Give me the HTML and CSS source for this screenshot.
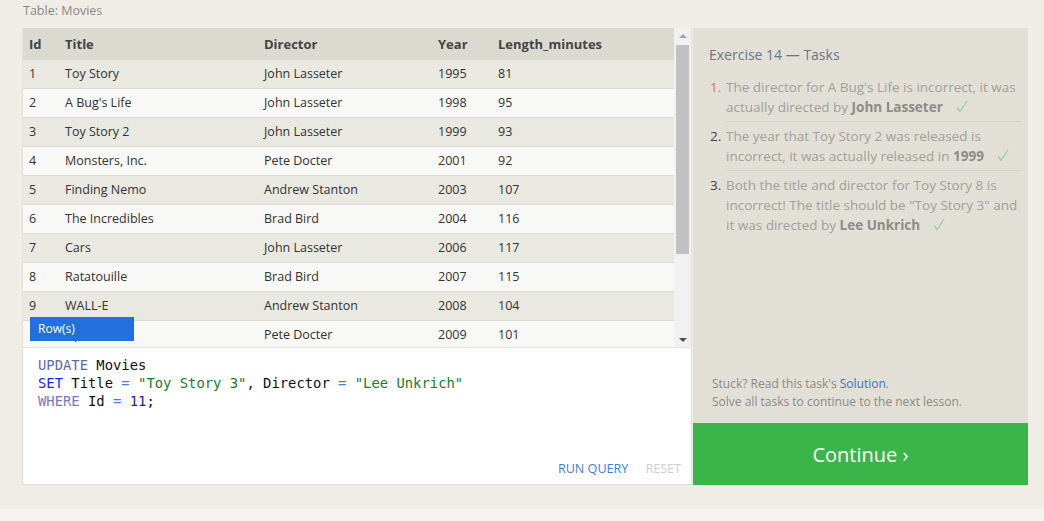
FILE: index.html
```html
<!DOCTYPE html>
<html>
<head>
<meta charset="utf-8">
<link rel="stylesheet" href="styles.css">
</head>
<body>
<div class="page">
  <div class="caption">Table: Movies</div>
  <div class="lesson">
    <div class="left">
      <div class="results">
        <div class="table">
          <div class="row head"><div>Id</div><div>Title</div><div>Director</div><div>Year</div><div>Length_minutes</div></div>
          <div class="row odd"><div>1</div><div>Toy Story</div><div>John Lasseter</div><div>1995</div><div>81</div></div>
          <div class="row even"><div>2</div><div>A Bug's Life</div><div>John Lasseter</div><div>1998</div><div>95</div></div>
          <div class="row odd"><div>3</div><div>Toy Story 2</div><div>John Lasseter</div><div>1999</div><div>93</div></div>
          <div class="row even"><div>4</div><div>Monsters, Inc.</div><div>Pete Docter</div><div>2001</div><div>92</div></div>
          <div class="row odd"><div>5</div><div>Finding Nemo</div><div>Andrew Stanton</div><div>2003</div><div>107</div></div>
          <div class="row even"><div>6</div><div>The Incredibles</div><div>Brad Bird</div><div>2004</div><div>116</div></div>
          <div class="row odd"><div>7</div><div>Cars</div><div>John Lasseter</div><div>2006</div><div>117</div></div>
          <div class="row even"><div>8</div><div>Ratatouille</div><div>Brad Bird</div><div>2007</div><div>115</div></div>
          <div class="row odd"><div>9</div><div>WALL-E</div><div>Andrew Stanton</div><div>2008</div><div>104</div></div>
          <div class="row even"><div>10</div><div>Up</div><div>Pete Docter</div><div>2009</div><div>101</div></div>
          <div class="tooltip">Row(s)</div>
        </div>
        <div class="scrollbar">
          <div class="arrow up"></div>
          <div class="track"><div class="thumb"></div></div>
          <div class="arrow down"></div>
        </div>
      </div>
      <div class="editor">
        <pre class="code"><span class="kw1">UPDATE</span> Movies
<span class="kw2">SET</span> Title <span class="op">=</span> <span class="str">"Toy Story 3"</span>, Director <span class="op">=</span> <span class="str">"Lee Unkrich"</span>
<span class="kw3">WHERE</span> Id <span class="op">=</span> <span class="num">11</span>;</pre>
        <div class="actions"><span class="run">RUN QUERY</span><span class="reset">RESET</span></div>
      </div>
    </div>
    <div class="right">
      <div class="tasks">
        <div class="tasks-title">Exercise 14 — Tasks</div>
        <ol class="task-list">
          <li class="task first"><span class="n">1.</span><span class="t">The director for A Bug's Life is incorrect, it was actually directed by <b>John Lasseter</b><svg class="check" width="12" height="13" viewBox="0 0 12 13"><polyline points="1,7.5 4,11.5 11,1" fill="none" stroke="#8fd29c" stroke-width="1.3"/></svg></span></li>
          <li class="task"><span class="n">2.</span><span class="t">The year that Toy Story 2 was released is incorrect, it was actually released in <b>1999</b><svg class="check" width="12" height="13" viewBox="0 0 12 13"><polyline points="1,7.5 4,11.5 11,1" fill="none" stroke="#8fd29c" stroke-width="1.3"/></svg></span></li>
          <li class="task"><span class="n">3.</span><span class="t">Both the title and director for Toy Story 8 is incorrect! The title should be "Toy Story 3" and it was directed by <b>Lee Unkrich</b><svg class="check" width="12" height="13" viewBox="0 0 12 13"><polyline points="1,7.5 4,11.5 11,1" fill="none" stroke="#8fd29c" stroke-width="1.3"/></svg></span></li>
        </ol>
      </div>
      <div class="help">
        <div>Stuck? Read this task's <span class="link">Solution</span>.</div>
        <div>Solve all tasks to continue to the next lesson.</div>
      </div>
      <div class="continue">Continue ›</div>
    </div>
  </div>
</div>
<div class="footer"></div>
</body>
</html>
```

FILE: styles.css
```css
* { box-sizing: border-box; }
html, body { margin: 0; padding: 0; }
body {
  background: #f4f3ef;
  font-family: "Open Sans", "Noto Sans", sans-serif;
  color: #333;
}
.page {
  background: #efede6;
  height: 509px;
  padding: 2px 16px 0 22px;
}
.caption {
  font-size: 12.5px;
  color: #888;
  height: 26px;
  line-height: 17px;
  padding-left: 1px;
}
.lesson {
  display: flex;
  height: 457px;
}
.left {
  width: 670px;
  border: 1px solid #e2e0d8;
  border-top: 0;
  display: flex;
  flex-direction: column;
  background: #fff;
}
.results {
  display: flex;
  height: 320px;
  border-bottom: 1px solid #e4e2da;
  overflow: hidden;
}
.table {
  width: 652px;
  position: relative;
  font-size: 12.5px;
  background: #f8f8f7;
}
.row {
  display: grid;
  grid-template-columns: 36px 199px 174px 60px 1fr;
  height: 29px;
  align-items: center;
  border-bottom: 1px solid #dcdbd4;
  padding-bottom: 1px;
}
.row > div { padding-left: 6px; white-space: nowrap; }
.row.head {
  height: 32px;
  background: #dbdad0;
  font-weight: 700;
  font-size: 13px;
  color: #444;
  border-bottom: 0;
  padding-bottom: 0;
}
.row.odd { background: #e9e8e1; }
.row.even { background: #f8f8f7; }
.tooltip {
  position: absolute;
  left: 7px;
  top: 289px;
  width: 104px;
  height: 24px;
  background: #2270dd;
  color: #fff;
  font-size: 12px;
  line-height: 23px;
  padding-left: 8px;
}
.scrollbar {
  width: 17px;
  background: #f1f1f1;
  display: flex;
  flex-direction: column;
  align-items: center;
}
.arrow { width: 17px; height: 17px; position: relative; }
.arrow::after {
  content: "";
  position: absolute;
  left: 5px;
  border-left: 4px solid transparent;
  border-right: 4px solid transparent;
}
.arrow.up::after { top: 6px; border-bottom: 4px solid #a3a3a3; }
.arrow.down::after { top: 8px; border-top: 4px solid #505050; }
.track { flex: 1; width: 100%; padding: 0 2px; }
.thumb { height: 209px; background: #c1c1c1; }
.editor {
  flex: 1;
  display: flex;
  flex-direction: column;
  background: #fff;
}
.code {
  margin: 0;
  padding: 8px 15px 0;
  font-family: "DejaVu Sans Mono", "Liberation Mono", monospace;
  font-size: 13.85px;
  line-height: 18px;
  color: #111;
  flex: 1;
}
.kw1 { color: #5f6aa8; }
.kw2 { color: #2222ee; }
.kw3 { color: #8077c0; }
.op { color: #4f7fd0; }
.str { color: #237a2a; }
.num { color: #2020b0; }
.actions {
  display: flex;
  justify-content: flex-end;
  gap: 17px;
  padding: 0 10px 7px 0;
  font-size: 12.6px;
}
.run { color: #3d7fdf; }
.reset { color: #cfcfcf; }
.right {
  width: 335px;
  background: #e2e0d6;
  display: flex;
  flex-direction: column;
  margin-left: 1px;
}
.tasks { flex: 1; padding: 17px 7px 0 16px; }
.tasks-title {
  font-size: 14px;
  color: #6b7585;
  line-height: 20px;
  margin-bottom: 12px;
}
.task-list { list-style: none; margin: 0; padding: 0; }
.task {
  display: flex;
  font-size: 13.5px;
  line-height: 20px;
  color: #a09f99;
}
.task + .task .t { border-top: 1px solid #d5d3c9; padding-top: 4px; }
.task .t { padding-bottom: 4px; flex: 1; }
.task .n { width: 17px; color: #3b4250; flex: none; text-align: left; padding-left: 1px; }
.task + .task .n { padding-top: 5px; }
.task.first .n { color: #c8862a; }
.task b { color: #8c8b86; }
.check { margin-left: 13px; vertical-align: -1px; }
.help {
  padding: 0 16px 12px 19px;
  font-size: 12px;
  line-height: 18px;
  color: #8a8986;
}
.link { color: #3a6fd8; }
.continue {
  height: 62px;
  background: #3ab54a;
  color: #fff;
  font-size: 20px;
  display: flex;
  align-items: center;
  justify-content: center;
}
.footer { height: 12px; }
```
